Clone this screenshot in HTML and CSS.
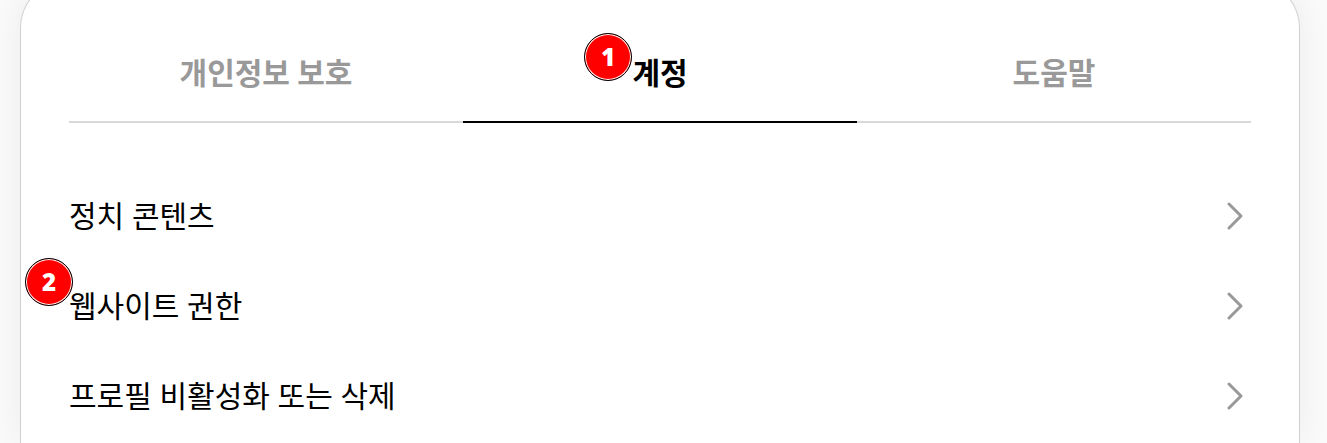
FILE: index.html
```html
<!DOCTYPE html>
<html lang="ko">
<head>
<meta charset="utf-8">
<title>설정</title>
<link rel="stylesheet" href="styles.css">
</head>
<body>
<main class="card">
  <div class="tabs" role="tablist">
    <button class="tab" role="tab" type="button" aria-selected="false">개인정보 보호</button>
    <button class="tab tab-active" role="tab" type="button" aria-selected="true"><span class="anchor">계정<span class="badge badge-tab">1</span></span></button>
    <button class="tab" role="tab" type="button" aria-selected="false">도움말</button>
  </div>
  <nav class="list">
    <a class="row" href="#politics"><span class="anchor label">정치 콘텐츠</span>
      <svg class="chevron" viewBox="0 0 16 28" aria-hidden="true"><path d="M2 2 14 14 2 26"/></svg></a>
    <a class="row" href="#permissions"><span class="anchor label">웹사이트 권한<span class="badge badge-row">2</span></span>
      <svg class="chevron" viewBox="0 0 16 28" aria-hidden="true"><path d="M2 2 14 14 2 26"/></svg></a>
    <a class="row" href="#deactivate"><span class="anchor label">프로필 비활성화 또는 삭제</span>
      <svg class="chevron" viewBox="0 0 16 28" aria-hidden="true"><path d="M2 2 14 14 2 26"/></svg></a>
  </nav>
</main>
</body>
</html>
```
FILE: styles.css
```css
* {
  box-sizing: border-box;
}

body {
  display: flow-root;
  margin: 0;
  padding: 0 27px 0 20px;
  background: #fafafa;
  font-family: Lato, "Noto Sans CJK KR", sans-serif;
  font-size: 30px;
  line-height: 42px;
  color: #000;
}

.card {
  margin-top: -20px;
  min-height: calc(100vh + 20px);
  padding: 68px 48px 0;
  border: 1px solid #d0d0d0;
  border-bottom: 0;
  border-radius: 48px 48px 0 0;
  background: #fff;
  box-shadow: 0 0 32px rgba(0, 0, 0, 0.06);
  clip-path: inset(0 -32px 0 -32px);
}

.tabs {
  display: flex;
}

.tab {
  flex: 1;
  height: 74px;
  padding: 0 0 26px;
  border: 0;
  border-bottom: 2px solid #d9d9d9;
  background: none;
  font: inherit;
  font-weight: 700;
  color: #999;
}

.tab-active {
  border-color: #000;
  color: #000;
}

.list {
  padding-top: 48px;
}

.row {
  display: flex;
  align-items: center;
  justify-content: space-between;
  height: 90px;
  padding-right: 8px;
  color: inherit;
  text-decoration: none;
}

.anchor {
  position: relative;
}

.label {
  padding-bottom: 2px;
}

.badge {
  position: absolute;
  width: 48px;
  height: 48px;
  border: 1px solid #000;
  border-radius: 50%;
  background: #f00;
  box-shadow: inset 0 0 0 1px #fff;
  font: 800 24px/46px "Open Sans", sans-serif;
  text-align: center;
  color: #fff;
}

.badge-tab {
  top: -21px;
  left: -48px;
}

.badge-row {
  top: -26px;
  left: -44px;
}

.chevron {
  width: 16px;
  height: 28px;
  fill: none;
  stroke: #999;
  stroke-width: 3;
  stroke-linecap: round;
  stroke-linejoin: round;
}
```
